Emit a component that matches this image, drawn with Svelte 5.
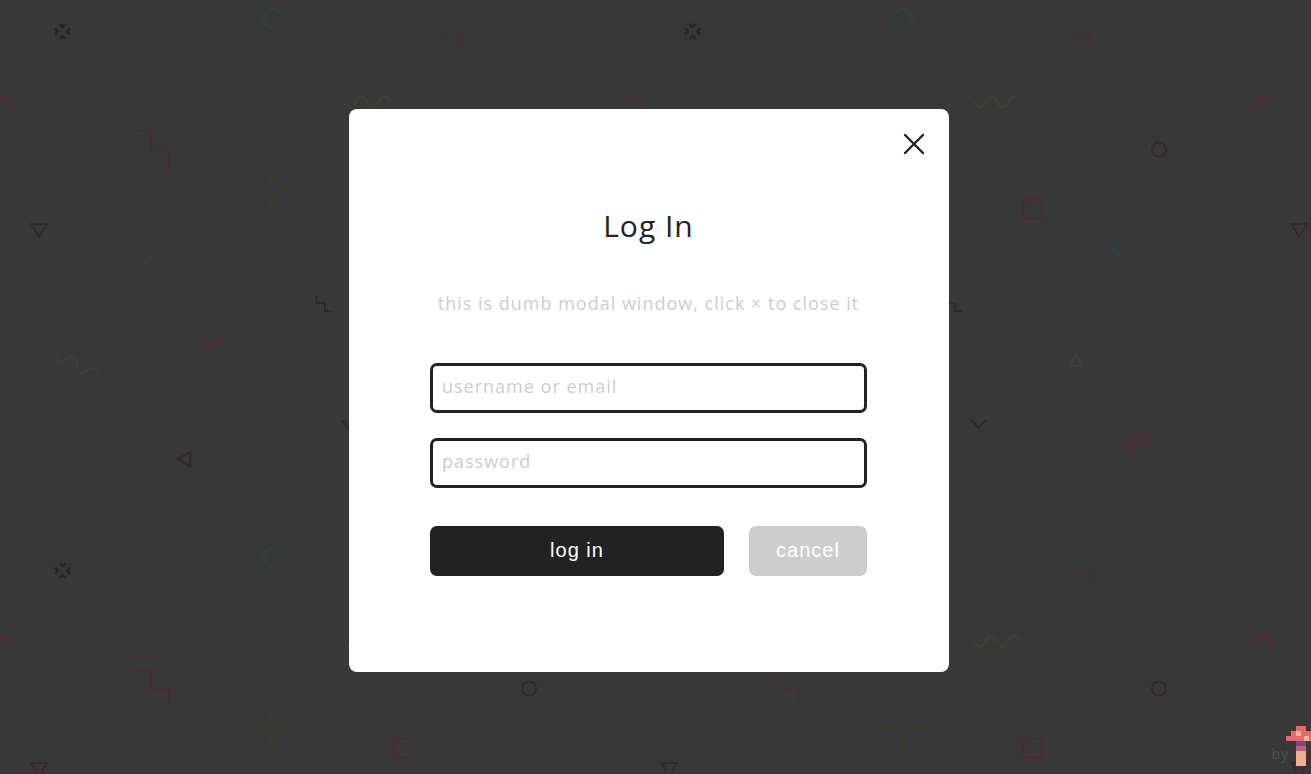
<script>
  let open = $state(true);
  let username = $state('');
  let password = $state('');
  const close = () => (open = false);
</script>

<main class="page">
  <svg class="pattern" aria-hidden="true">
    <defs>
      <pattern id="confetti" width="630" height="539" patternUnits="userSpaceOnUse">
        <g fill="none" stroke-width="2.2">
          <path
            d="M59.500 24l3 3 3-3M59.500 39l3-3 3 3M55 28.500l3 3-3 3M70 28.500l-3 3 3 3"
            stroke="#282425"
            stroke-width="2.600"
          />
          <g stroke="#2c4242">
            <circle cx="273" cy="18.500" r="9.500" />
            <circle cx="153.500" cy="265.500" r="9" />
            <path d="M484.500 240v9M476.500 247l8 2 8-2M479.500 256.500l5-7.500 5 7.500" />
            <path d="M618 444v15M610.500 451.500h15" />
          </g>
          <g stroke="#4c2a32">
            <path d="M444 34l4.500 4.500M451.500 29v6M461 31l-4.500 5M463 39h-6M461 46l-4-3.500" />
            <path
              d="M-7 106a9 9 0 0 1 18 0M623 106a9 9 0 0 1 18 0M202 335a9 9 0 0 0 18 0"
              stroke="#562b37"
              stroke-width="2.500"
            />
            <path d="M133.500 131h17.500v18.500h17.500v18" />
            <rect x="393.500" y="199.500" width="19" height="19" />
            <path d="M493.500 448.500l18-18M500 453.500l18-18" stroke="#562b37" />
          </g>
          <path d="M271.500 171v12M271.500 196v12M252 190h12M278 190h13" stroke="#3e3e24" />
          <path d="M594 316v7M587 321.500l7 1.500 7-1.500M589.500 330l4.500-7 4.500 7" stroke="#3e3b2e" stroke-width="1.800" />
          <g stroke="#3e3f31">
            <path d="M344 102q6 11 11.500 0t11.500 0 11.500 0 11.500 0" />
            <path d="M56 354c0 9 6 10 11 5 5-4 11-2 10 5-1 9 4 12 10 7s11-3 11 7" />
            <path d="M446 354l6.500 12h-13z" stroke="#3b4132" />
          </g>
          <g stroke="#32282d">
            <path d="M31.500 224h15.500l-8 12.500z" />
            <path d="M190.500 452l-.5 14.500-12-8z" />
            <circle cx="529" cy="149.500" r="7" />
            <path d="M341 420l7.500 7.500L356 420" />
          </g>
          <path d="M316.500 296v7h8.500v8h7" stroke="#2d292b" />
        </g>
      </pattern>
    </defs>
    <rect width="100%" height="100%" fill="url(#confetti)" />
  </svg>

  {#if open}
    <div class="modal" role="dialog" aria-modal="true" aria-labelledby="login-title">
      <button class="close" type="button" aria-label="Close" onclick={close}>
        <svg viewBox="0 0 22 22" width="22" height="22" aria-hidden="true">
          <path d="M2 2l18 18M20 2L2 20" stroke="#222" stroke-width="2.400" stroke-linecap="round" />
        </svg>
      </button>

      <h1 id="login-title">Log In</h1>
      <p>this is dumb modal window, click × to close it</p>

      <form onsubmit={(event) => event.preventDefault()}>
        <input type="text" placeholder="username or email" aria-label="username or email" bind:value={username} />
        <input type="password" placeholder="password" aria-label="password" bind:value={password} />
        <div class="actions">
          <button class="action submit" type="submit">log in</button>
          <button class="action cancel" type="button" onclick={close}>cancel</button>
        </div>
      </form>
    </div>
  {/if}

  <footer>
    <span>by</span>
    <svg viewBox="0 0 30 40" width="30" height="40" shape-rendering="crispEdges" aria-hidden="true">
      <path d="M10 0h10v5h5v5h5v5H0v-5h5V5h5z" fill="#ea6670" />
      <path d="M10 5h5v5h-5zM18 10h5v5h-5z" fill="#f9b88e" />
      <path d="M10 15h10v5H10z" fill="#6d5078" />
      <path d="M10 20h10v5H10z" fill="#bd617f" />
      <path d="M10 25h10v15H10z" fill="#f3ab89" />
    </svg>
  </footer>
</main>

<style>
  :global(body) {
    margin: 0;
    background: #383838;
  }

  .page {
    position: relative;
    box-sizing: border-box;
    display: grid;
    place-items: center;
    min-height: 100vh;
    padding: 10px 13px 0 0;
    overflow: hidden;
    border-bottom: 3px solid #3c3337;
    font-family: 'Open Sans', sans-serif;
    letter-spacing: 1px;
  }

  .pattern {
    position: absolute;
    inset: 0;
    width: 100%;
    height: 100%;
  }

  .modal {
    position: relative;
    box-sizing: border-box;
    width: 100%;
    max-width: 600px;
    padding: 97px 82px 96px 81px;
    border-radius: 8px;
    background: #fff;
  }

  .close {
    position: absolute;
    top: 24px;
    right: 24px;
    display: flex;
    padding: 0;
    border: 0;
    background: none;
    cursor: pointer;
  }

  h1 {
    margin: 0;
    color: #222;
    font-size: 30px;
    font-weight: 400;
    line-height: 40px;
    text-align: center;
  }

  p {
    margin: 45px 0 48px;
    color: #cdcdcd;
    font-size: 18px;
    line-height: 24px;
    text-align: center;
    white-space: nowrap;
  }

  form {
    display: flex;
    flex-direction: column;
    gap: 25px;
  }

  input {
    box-sizing: border-box;
    width: 100%;
    height: 50px;
    padding: 0 9px 5px;
    border: 3px solid #222;
    border-radius: 7px;
    outline: 0;
    background: #fff;
    color: #222;
    font: 18px 'Open Sans', sans-serif;
    letter-spacing: 1px;
  }

  input::placeholder {
    color: #cdcdcd;
    opacity: 1;
  }

  .actions {
    display: flex;
    gap: 25px;
    padding-top: 13px;
  }

  .action {
    height: 50px;
    padding: 0 0 2px;
    border: 0;
    border-radius: 7px;
    color: #fff;
    font: 20px 'Liberation Sans', sans-serif;
    letter-spacing: 1px;
    cursor: pointer;
  }

  .submit {
    flex: 1;
    background: #222;
  }

  .cancel {
    width: 118px;
    background: #cdcdcd;
  }

  footer {
    position: absolute;
    right: -5px;
    bottom: 5px;
    display: flex;
    align-items: flex-end;
    color: #505050;
    font-size: 14px;
    line-height: 24px;
  }

  footer svg {
    margin-left: -3px;
  }
</style>
